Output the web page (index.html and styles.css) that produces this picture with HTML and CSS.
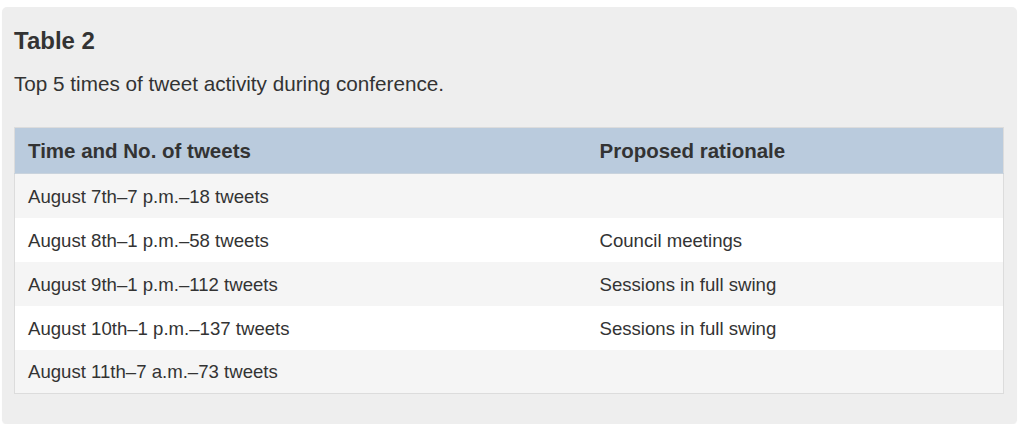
FILE: index.html
```html
<!DOCTYPE html>
<html lang="en">
<head>
    <meta charset="UTF-8">
    <meta name="viewport" content="width=device-width, initial-scale=1.0">
    <title>Table 2</title>
    <link rel="stylesheet" href="styles.css">
</head>
<body>

    <div class="table-box">
        <h3 class="table-title">Table 2</h3>
        <p class="table-caption">Top 5 times of tweet activity during conference.</p>

        <table class="data-table">
            <thead>
                <tr>
                    <th class="col-time">Time and No. of tweets</th>
                    <th>Proposed rationale</th>
                </tr>
            </thead>
            <tbody>
                <tr>
                    <td>August 7th–7 p.m.–18 tweets</td>
                    <td></td>
                </tr>
                <tr>
                    <td>August 8th–1 p.m.–58 tweets</td>
                    <td>Council meetings</td>
                </tr>
                <tr>
                    <td>August 9th–1 p.m.–112 tweets</td>
                    <td>Sessions in full swing</td>
                </tr>
                <tr>
                    <td>August 10th–1 p.m.–137 tweets</td>
                    <td>Sessions in full swing</td>
                </tr>
                <tr>
                    <td>August 11th–7 a.m.–73 tweets</td>
                    <td></td>
                </tr>
            </tbody>
        </table>
    </div>

</body>
</html>
```

FILE: styles.css
```css
* {
    margin: 0;
    padding: 0;
    box-sizing: border-box;
    font-family: 'Liberation Sans', Arial, sans-serif;
}

body {
    background: #ffffff;
    color: #333333;
}

.table-box {
    margin: 7px 0 0 2px;
    width: 1015px;
    height: 417px;
    padding: 20px 13px 0 12px;
    background: #eeeeee;
    border-radius: 5px;
    box-shadow: 0 1px 1px rgba(0, 0, 0, 0.05);
}

.table-title {
    font-size: 24px;
    line-height: 28px;
    font-weight: bold;
}

.table-caption {
    margin-top: 17px;
    font-size: 20.7px;
    line-height: 24px;
}

.data-table {
    margin-top: 31px;
    width: 990px;
    border-collapse: collapse;
    border: 1px solid #dcdcdc;
    table-layout: fixed;
}

.data-table th {
    height: 46px;
    padding: 1px 13px 0;
    background: #bacbdd;
    border-bottom: 1px solid #c9d3dd;
    text-align: left;
    font-size: 20.5px;
    font-weight: bold;
    vertical-align: middle;
}

.data-table .col-time {
    width: 572px;
}

.data-table td {
    height: 44px;
    padding: 2px 13px 0;
    font-size: 18.6px;
    vertical-align: middle;
    background: #ffffff;
}

.data-table tbody tr:nth-child(odd) td {
    background: #f5f5f5;
}
```
